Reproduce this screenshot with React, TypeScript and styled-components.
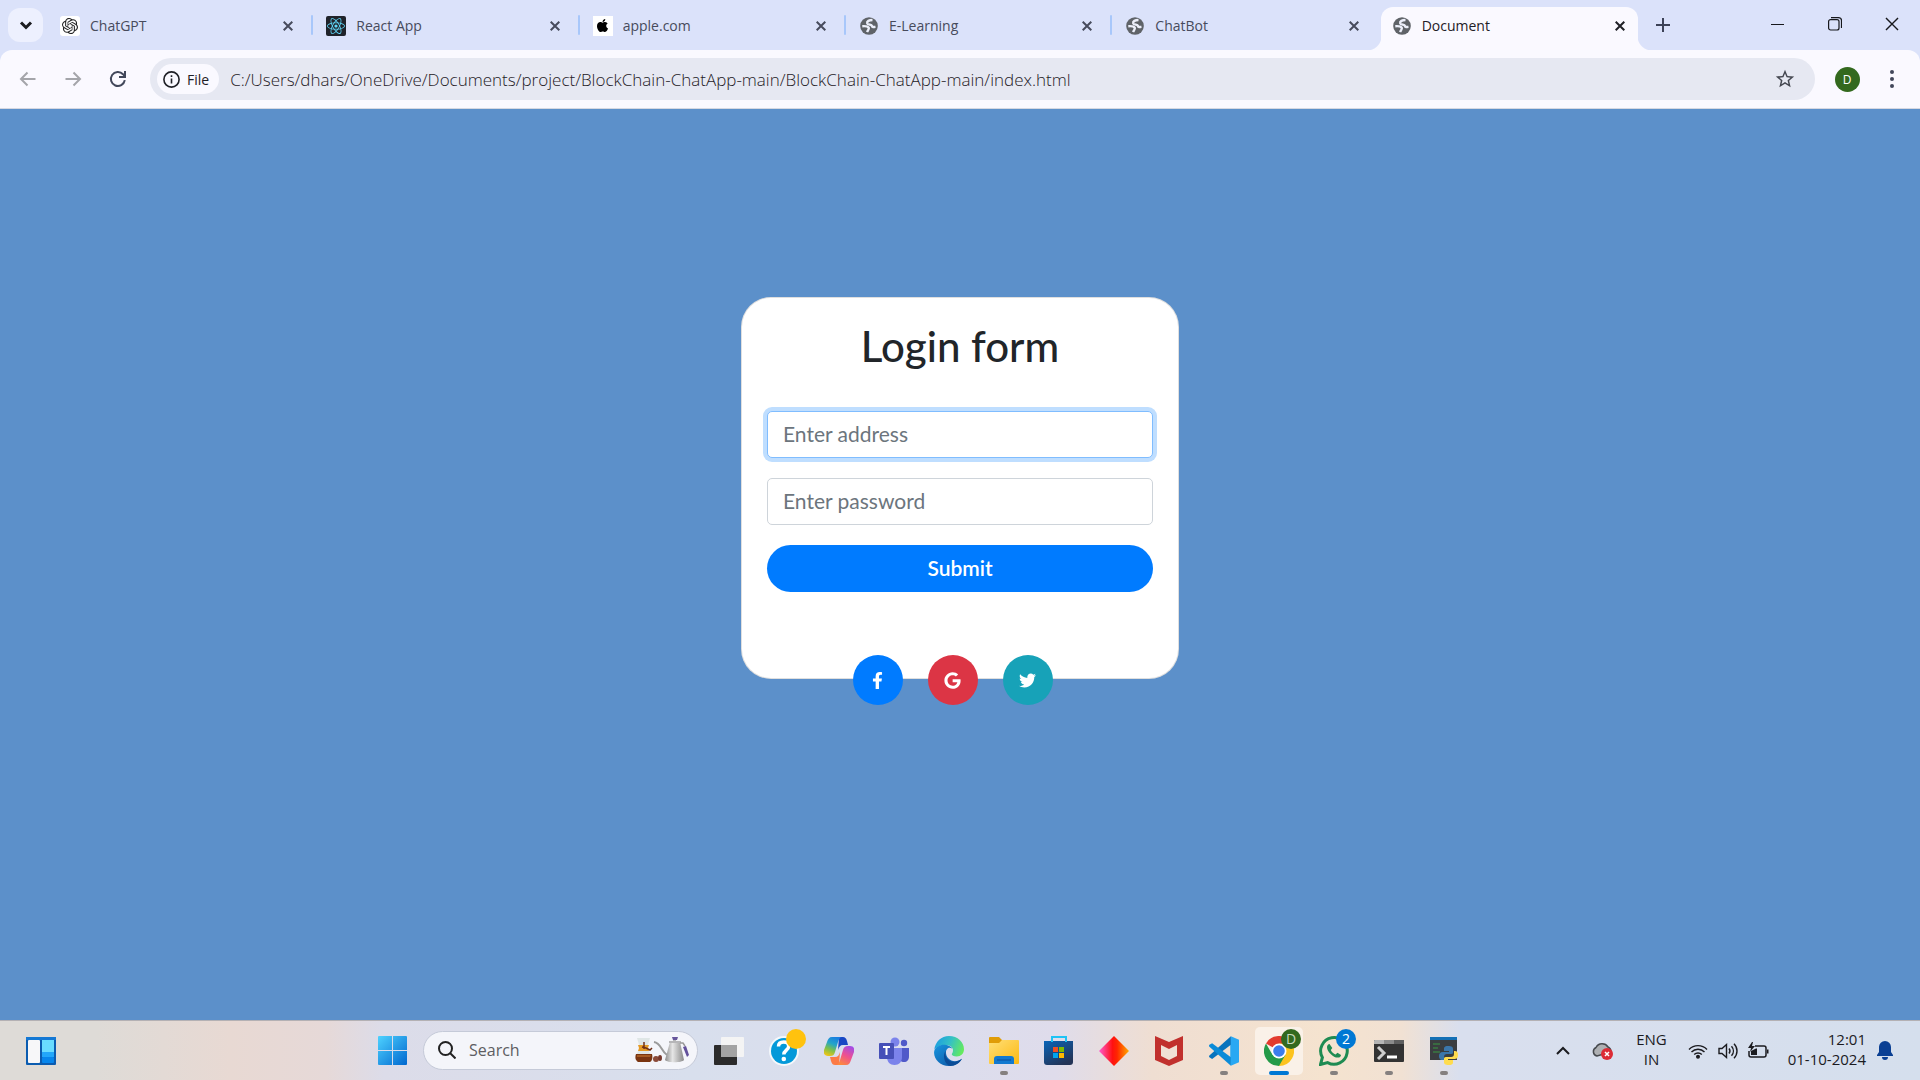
import React from "react";
import styled, { createGlobalStyle, css } from "styled-components";
import { FaApple, FaFacebookF, FaGoogle, FaReact, FaTwitter } from "react-icons/fa";
import { SiOpenai } from "react-icons/si";
import { MdStarBorder } from "react-icons/md";

const uiFont = '"Open Sans", "Noto Sans", sans-serif';
const pageFont = 'Lato, "Open Sans", sans-serif';

const GlobalStyle = createGlobalStyle`
  *, *::before, *::after { box-sizing: border-box; }
  body { margin: 0; font-family: ${uiFont}; }
  button, input { font: inherit; color: inherit; }
  button { border: 0; padding: 0; background: none; cursor: pointer; }
  svg { display: block; flex: none; }
`;

const Screen = styled.div`
  display: flex;
  flex-direction: column;
  min-height: 100vh;
  background: #dbe2fa;
`;

/* ---------- tab strip ---------- */

const TabStrip = styled.div`
  display: flex;
  align-items: stretch;
  height: 50px;
  padding-left: 8px;
`;

const TabSearch = styled.button`
  display: grid;
  place-items: center;
  flex: none;
  width: 35px;
  height: 34px;
  margin: 8px 6px 0 0;
  border-radius: 12px;
  background: #edf0fe;
  color: #1b1c20;
`;

const Tabs = styled.div`
  display: flex;
  flex: 0 1 1589px;
  min-width: 0;
  padding-top: 7px;
`;

const Tab = styled.div<{ $active?: boolean }>`
  position: relative;
  display: flex;
  flex: 1 1 0;
  align-items: center;
  gap: 10px;
  min-width: 0;
  padding: 0 6px 6px 11px;
  color: #474b5c;
  ${(p) =>
    p.$active &&
    css`
      background: #faf9ff;
      border-radius: 12px 12px 0 0;
      color: #1f2026;
      &::before,
      &::after {
        content: "";
        position: absolute;
        bottom: 0;
        width: 14px;
        height: 14px;
      }
      &::before {
        right: 100%;
        background: radial-gradient(circle at 0 0, transparent 14px, #faf9ff 15px);
      }
      &::after {
        left: 100%;
        background: radial-gradient(circle at 100% 0, transparent 14px, #faf9ff 15px);
      }
    `}
`;

const Favicon = styled.span<{ $bg?: string; $color?: string; $radius?: number }>`
  display: grid;
  place-items: center;
  flex: none;
  width: 20px;
  height: 20px;
  background: ${(p) => p.$bg ?? "transparent"};
  color: ${(p) => p.$color ?? "#5f6368"};
  border-radius: ${(p) => p.$radius ?? 0}px;
`;

const TabTitle = styled.span`
  flex: 1;
  overflow: hidden;
  white-space: nowrap;
  font-size: 14px;
  line-height: 20px;
`;

const TabClose = styled.button`
  display: grid;
  place-items: center;
  width: 24px;
  height: 24px;
`;

const TabSeparator = styled.span<{ $hidden?: boolean }>`
  flex: none;
  width: 2px;
  height: 20px;
  margin: 8px 2px 0 5px;
  border-radius: 1px;
  background: ${(p) => (p.$hidden ? "transparent" : "#a8c7fa")};
`;

const NewTab = styled.button`
  display: grid;
  place-items: center;
  width: 28px;
  margin: 0 0 0 11px;
  color: #3c4257;
`;

const WindowControls = styled.div`
  display: flex;
  margin-left: auto;
`;

const WindowButton = styled.button`
  display: grid;
  place-items: center;
  width: 57px;
  height: 48px;
  color: #17181c;
`;

/* ---------- toolbar ---------- */

const Toolbar = styled.div`
  display: flex;
  align-items: center;
  height: 59px;
  padding: 0 10px 0 5px;
  background: #faf9ff;
  border-bottom: 1px solid #d5d8e2;
  border-radius: 12px 12px 0 0;
`;

const NavButton = styled.button<{ $muted?: boolean }>`
  display: grid;
  place-items: center;
  flex: none;
  width: 45px;
  height: 42px;
  color: ${(p) => (p.$muted ? "#a4a5aa" : "#41475a")};
`;

const Omnibox = styled.div`
  display: flex;
  align-items: center;
  flex: 1;
  min-width: 0;
  height: 42px;
  margin: 0 14px 0 10px;
  padding: 0 19px 0 7px;
  border-radius: 21px;
  background: #e6e8f2;
`;

const FileChip = styled.button`
  display: flex;
  align-items: center;
  gap: 7px;
  height: 30px;
  padding: 0 10px 0 6px;
  border-radius: 15px;
  background: #faf9ff;
  color: #1f2026;
  font-size: 14px;
`;

const AddressInput = styled.input`
  flex: 1;
  min-width: 0;
  height: 30px;
  margin-left: 11px;
  padding: 0;
  border: 0;
  outline: 0;
  background: none;
  color: #1f2026;
  font-size: 17px;
  font-weight: 350;
`;

const StarButton = styled.button`
  color: #444750;
`;

const ProfileButton = styled.button`
  display: grid;
  place-items: center;
  width: 36px;
  height: 36px;
`;

const Avatar = styled.span`
  display: grid;
  place-items: center;
  width: 25px;
  height: 25px;
  border-radius: 50%;
  background: #33691e;
  color: #fff;
  font-size: 12px;
`;

const MenuButton = styled.button`
  display: grid;
  place-items: center;
  width: 36px;
  height: 36px;
  margin-left: 9px;
  color: #41475a;
`;

/* ---------- page ---------- */

const Page = styled.main`
  display: flex;
  flex: 1;
  align-items: flex-start;
  justify-content: center;
  padding: 188px 24px 60px;
  background: #5c90ca;
  font-family: ${pageFont};
`;

const Card = styled.form`
  display: flex;
  flex-direction: column;
  width: 100%;
  max-width: 438px;
  padding: 24px 25px 0;
  border: 1px solid rgba(0, 0, 0, 0.125);
  border-radius: 30px;
  background: #fff;
`;

const Title = styled.h1`
  margin: 0 0 41px;
  color: #212529;
  font-size: 42px;
  font-weight: 500;
  line-height: 48px;
  text-align: center;
`;

const Field = styled.input<{ $focused?: boolean }>`
  width: 100%;
  height: 47px;
  margin-bottom: 20px;
  padding: 0 15px 2px;
  border: 1px solid ${(p) => (p.$focused ? "#80bdff" : "#ced4da")};
  border-radius: 5px;
  outline: 0;
  background: #fff;
  box-shadow: ${(p) => (p.$focused ? "0 0 0 4px #bfdeff" : "none")};
  color: #495057;
  font-size: 21px;
  &::placeholder {
    color: #6c757d;
    opacity: 1;
  }
`;

const Submit = styled.button`
  height: 47px;
  margin-bottom: 63px;
  padding-bottom: 3px;
  border-radius: 24px;
  background: #007bff;
  color: #fff;
  font-size: 21px;
  font-weight: 600;
`;

const SocialRow = styled.div`
  display: flex;
  justify-content: center;
  gap: 25px;
  margin: 0 15px -27px 0;
`;

const SocialLink = styled.a<{ $bg: string }>`
  display: grid;
  place-items: center;
  width: 50px;
  height: 50px;
  border-radius: 50%;
  background: ${(p) => p.$bg};
  color: #fff;
  font-size: 17px;
`;

/* ---------- taskbar ---------- */

const Taskbar = styled.footer`
  display: grid;
  grid-template-columns: 1fr auto 1fr;
  align-items: center;
  height: 60px;
  border-top: 1px solid #b4b1b4;
  background: linear-gradient(
    90deg,
    #dedbd7 0%,
    #dedbd7 5%,
    #e8d9d3 12%,
    #e6d9d8 17%,
    #dcdce9 20%,
    #d8dfed 36%,
    #dcdded 50%,
    #dfdceb 55%,
    #efded2 60%,
    #f5e3cf 69%,
    #f1e1d3 73%,
    #d9dfee 76%,
    #d5dfed 100%
  );
`;

const TaskLeft = styled.div`
  padding-left: 17px;
`;

const TaskCenter = styled.div`
  display: flex;
  gap: 7px;
  margin-right: 84px;
`;

const TaskButton = styled.button<{ $active?: boolean }>`
  position: relative;
  display: grid;
  place-items: center;
  width: 48px;
  height: 48px;
  border-radius: 5px;
  background: ${(p) => (p.$active ? "#faf1e8" : "none")};
`;

const Indicator = styled.span<{ $active?: boolean }>`
  position: absolute;
  bottom: 0;
  left: 50%;
  width: ${(p) => (p.$active ? 20 : 8)}px;
  height: 4px;
  border-radius: 2px;
  background: ${(p) => (p.$active ? "#0078d4" : "#85807f")};
  transform: translateX(-50%);
`;

const Badge = styled.span<{ $bg: string; $color?: string }>`
  position: absolute;
  top: 2px;
  right: 2px;
  display: grid;
  place-items: center;
  width: 20px;
  height: 20px;
  border-radius: 50%;
  background: ${(p) => p.$bg};
  color: ${(p) => p.$color ?? "#fff"};
  font-size: 14px;
  line-height: 20px;
`;

const SearchBox = styled.label`
  display: flex;
  align-items: center;
  gap: 13px;
  width: 275px;
  height: 39px;
  margin-top: 4px;
  padding: 0 7px 0 14px;
  border: 1px solid #c5cad8;
  border-radius: 20px;
  background: #f4f5fa;
`;

const SearchInput = styled.input`
  flex: 1;
  min-width: 0;
  padding: 0;
  border: 0;
  outline: 0;
  background: none;
  font-size: 16px;
  &::placeholder {
    color: #5d5d62;
    opacity: 1;
  }
`;

const Tray = styled.div`
  display: flex;
  align-items: center;
  justify-content: flex-end;
  padding-right: 27px;
  color: #1b1b1f;
  font-size: 15px;
  line-height: 20px;
`;

const TrayButton = styled.button<{ $gap?: number }>`
  display: flex;
  align-items: center;
  gap: 10px;
  margin-left: ${(p) => p.$gap ?? 0}px;
`;

const TrayText = styled.button<{ $align: string; $gap: number }>`
  display: flex;
  flex-direction: column;
  align-items: ${(p) => p.$align};
  margin-left: ${(p) => p.$gap}px;
  padding-bottom: 3px;
`;

/* ---------- drawings ---------- */

const Cross = ({ size = 10, width = 2 }: { size?: number; width?: number }) => (
  <svg width={size} height={size} viewBox="0 0 10 10" fill="none" stroke="currentColor" strokeWidth={width}>
    <path d="M.7.7l8.6 8.6M9.3.7L.7 9.3" />
  </svg>
);

const Globe = () => (
  <svg width="20" height="20" viewBox="0 0 20 20">
    <circle cx="10" cy="10" r="8.800" fill="#5f6368" />
    <g fill="none" stroke="#eceffa" strokeWidth="2.400">
      <path d="M13.500 4C10 4 7.800 5.200 8.200 7.200c.4 1.700 4.300 1.300 4.700 2.700.2 1 .9 1.300 3.600 1" />
      <path d="M3.300 10.200c2.500-.2 5.700.2 6.500 1.600.5 1.200-.8 2.200-1.800 4.200" />
    </g>
  </svg>
);

const Chevron = ({ up, size, width = 2 }: { up?: boolean; size: number; width?: number }) => (
  <svg width={size} height={size} viewBox="0 0 16 16" fill="none" stroke="currentColor" strokeWidth={width}>
    <path d={up ? "M2 11l6-6 6 6" : "M3 5.500l5 5 5-5"} />
  </svg>
);

const Arrow = ({ forward }: { forward?: boolean }) => (
  <svg width="18" height="18" viewBox="0 0 18 18" fill="none" stroke="currentColor" strokeWidth="2">
    {forward ? <path d="M1.500 9h14M9.500 2.500L16 9l-6.500 6.500" /> : <path d="M16.500 9h-14M8.500 2.500L2 9l6.500 6.500" />}
  </svg>
);

const Reload = () => (
  <svg width="18" height="18" viewBox="0 0 18 18" fill="none" stroke="currentColor" strokeWidth="2">
    <path d="M15.800 10.200A7 7 0 1 1 14 4.200L16 6.500" />
    <path d="M16 1v6h-6" />
  </svg>
);

const WidgetsIcon = () => (
  <svg width="30" height="28" viewBox="0 0 30 28">
    <rect width="30" height="28" rx="1" fill="#0b5cb0" />
    <rect width="30" height="3" fill="#1478d4" />
    <rect x="2" y="3" width="12" height="23" rx="1" fill="#f7f7f9" />
    <rect x="16" y="3" width="12" height="12" fill="#69dcff" />
    <rect x="16" y="15" width="12" height="5" fill="#22a7fa" />
    <rect x="16" y="20" width="12" height="6" rx="1" fill="#0786ec" />
  </svg>
);

const WindowsIcon = () => (
  <svg width="29" height="29" viewBox="0 0 29 29">
    <defs>
      <linearGradient id="win" x1="0" y1="0" x2="1" y2="1">
        <stop offset="0" stopColor="#4ed2ff" />
        <stop offset="1" stopColor="#0067cf" />
      </linearGradient>
    </defs>
    <path fill="url(#win)" d="M1 0h13v14H0V1a1 1 0 0 1 1-1zM15 0h13a1 1 0 0 1 1 1v13H15zM0 15h14v14H1a1 1 0 0 1-1-1zM15 15h14v13a1 1 0 0 1-1 1H15z" />
  </svg>
);

const CoffeeArt = () => (
  <svg width="56" height="26" viewBox="0 0 56 26">
    <defs>
      <linearGradient id="kettle">
        <stop offset="0" stopColor="#8c8c8c" />
        <stop offset=".4" stopColor="#e6e6e6" />
        <stop offset="1" stopColor="#8a8a8a" />
      </linearGradient>
    </defs>
    <path d="M3 1h13l-3 10 4 7H2l4-7z" fill="#dfe6e6" />
    <path d="M2 17h16c1 4 0 7-2 8H4c-3-2-3-5-2-8z" fill="#7a3511" />
    <path d="M3 18h14l-1 2H3z" fill="#a65a22" />
    <path d="M4 8h11l-1 3 1 3H4l1-3z" fill="#e59b26" />
    <path d="M10 5v7M8 10l4 1 4 2 2-2" stroke="#703018" strokeWidth="1.500" fill="none" />
    <ellipse cx="22" cy="22" rx="3" ry="3" fill="#8b4a39" />
    <ellipse cx="26" cy="21" rx="2" ry="3" fill="#77382c" />
    <path d="M33 18C27 14 27 6 20 5" stroke="#9a9a9a" strokeWidth="2" fill="none" />
    <path d="M36 5h10l4 18c-2 3-17 3-19 0z" fill="url(#kettle)" />
    <path d="M35 4h12v2H35zM39 2h3v2h-3z" fill="#b6b6b8" />
    <path d="M38 0h6l-1 3h-4z" fill="#66559b" />
    <path d="M46 6h3l2 3" stroke="#999" strokeWidth="1.500" fill="none" />
    <path d="M49 10l3-1 3 9-2 2z" fill="#62509b" />
  </svg>
);

const TaskViewIcon = () => (
  <svg width="30" height="28" viewBox="0 0 30 28">
    <rect y="8" width="23" height="20" rx="1" fill="#2b2b2b" />
    <rect x="7" width="23" height="20" rx="1" fill="#f4f4f4" />
    <rect x="7" y="8" width="16" height="12" fill="#a3a3a3" />
  </svg>
);

const HelpIcon = () => (
  <svg width="30" height="30" viewBox="0 0 30 30">
    <circle cx="15" cy="15" r="15" fill="#f4f8fb" />
    <circle cx="15" cy="15" r="13" fill="#0499d9" />
    <path d="M9.500 10.500c0-3 2.200-4.500 5.200-4.500s5 1.600 5 4.200c0 3.800-4.900 4-4.900 8.300" stroke="#fff" strokeWidth="3.500" fill="none" />
    <circle cx="14.800" cy="23" r="2.300" fill="#fff" />
  </svg>
);

const CopilotIcon = () => (
  <svg width="30" height="28" viewBox="0 0 30 28">
    <defs>
      <linearGradient id="cpA" x1=".6" y1="0" x2=".2" y2="1">
        <stop offset="0" stopColor="#1a7fe0" />
        <stop offset=".35" stopColor="#24a5c9" />
        <stop offset=".65" stopColor="#7cc04b" />
        <stop offset="1" stopColor="#f5c514" />
      </linearGradient>
      <linearGradient id="cpB" x1=".8" y1="0" x2=".3" y2="1">
        <stop offset="0" stopColor="#a14be8" />
        <stop offset=".5" stopColor="#ee5090" />
        <stop offset="1" stopColor="#fd8a3c" />
      </linearGradient>
    </defs>
    <path d="M15 0h4c2 0 3 1 4 4l1 4h-5c-3 0-4 2-5 5z" fill="#1947c4" />
    <path d="M15 28h-4c-2 0-3-1-4-4l-1-4h5c3 0 4-2 5-5z" fill="#fc7a45" />
    <path d="M8 0h10c-2 0-3 2-4 5l-3 10c-1 3-2 4-5 4H4c-3 0-5-2-4-6l3-8c1-3 2-5 5-5z" fill="url(#cpA)" />
    <path d="M22 28H12c2 0 3-2 4-5l3-10c1-3 2-4 5-4h2c3 0 5 2 4 6l-3 8c-1 3-2 5-5 5z" fill="url(#cpB)" />
  </svg>
);

const TeamsIcon = () => (
  <svg width="30" height="28" viewBox="0 0 30 28">
    <circle cx="16" cy="5" r="4.500" fill="#7b83eb" />
    <circle cx="25" cy="6" r="3.200" fill="#5059c9" />
    <path d="M20 11h10v8c0 4-2 6-5 6s-5-2-5-6z" fill="#5059c9" />
    <path d="M8 11h15v9c0 5-3 8-7.500 8S8 25 8 20z" fill="#7b83eb" />
    <rect y="6" width="15" height="16" rx="1" fill="#4650b8" />
    <path d="M4 10h7M7.500 10v8" stroke="#fff" strokeWidth="2" />
  </svg>
);

const EdgeIcon = () => (
  <svg width="30" height="30" viewBox="0 0 24 24">
    <defs>
      <linearGradient id="edA" x1="0" y1=".3" x2="1" y2=".6">
        <stop offset="0" stopColor="#1b9de2" />
        <stop offset=".5" stopColor="#35c1c4" />
        <stop offset="1" stopColor="#66eb5c" />
      </linearGradient>
      <linearGradient id="edB" x1="0" y1="0" x2="1" y2="1">
        <stop offset="0" stopColor="#1795df" />
        <stop offset="1" stopColor="#0c4f9e" />
      </linearGradient>
    </defs>
    <path d="M.2 11C1 4.500 5.900 0 12 0c7 0 12 5 12 10.500 0 3.500-2.500 5.800-5.800 5.800-2.600 0-4-.9-4-1.700 0-.7 1-1.200 1-3.100 0-2.300-2.300-4.300-5.700-4.300C5 7.200 1.500 9 .2 11z" fill="url(#edA)" />
    <path d="M.1 12.500C.5 9 4.600 6.800 8.700 7c3.300.2 5.300 1.800 5.900 3.100-1-.7-2.400-.9-3.400-.3-2.200 1.300-2.200 5.200.2 8 2.800 3.200 7.500 3 11 .4-2 3.600-6 5.800-10.400 5.800C5 24-.5 18.500.1 12.500z" fill="url(#edB)" />
    <path d="M9.400 11.800c-.8 2.500-.1 5.500 2.200 7.400 3 2.500 7.400 1.700 10.800-1-1.900 3.600-5.400 5.600-9.400 5.800-4.300-1-6.700-8.400-3.600-12.200z" fill="#0a4c97" />
  </svg>
);

const ExplorerIcon = () => (
  <svg width="30" height="27" viewBox="0 0 30 27">
    <defs>
      <linearGradient id="fold" x1="0" y1="0" x2="1" y2="1">
        <stop offset="0" stopColor="#ffdf77" />
        <stop offset="1" stopColor="#fcb912" />
      </linearGradient>
    </defs>
    <path d="M0 1a1 1 0 0 1 1-1h9l3 3h16v5H0z" fill="#e09c08" />
    <path d="M0 6h10l3-3h16a1 1 0 0 1 1 1v22a1 1 0 0 1-1 1H1a1 1 0 0 1-1-1z" fill="url(#fold)" />
    <path d="M5 27v-5a3 3 0 0 1 3-3h14a3 3 0 0 1 3 3v5z" fill="#1279d0" />
    <path d="M8 23h14" stroke="#0a4f9b" strokeWidth="1" />
  </svg>
);

const StoreIcon = () => (
  <svg width="30" height="30" viewBox="0 0 30 30">
    <defs>
      <linearGradient id="store" x1="0" y1="0" x2=".6" y2="1">
        <stop offset="0" stopColor="#0a64b8" />
        <stop offset="1" stopColor="#233457" />
      </linearGradient>
    </defs>
    <path d="M0 5h29v21a3 3 0 0 1-3 3H3a3 3 0 0 1-3-3z" fill="url(#store)" />
    <path d="M8 6V1h14v5" stroke="#1fc3f5" strokeWidth="2" fill="none" />
    <path d="M9 11h5v5H9z" fill="#f25022" />
    <path d="M15 11h5v5h-5z" fill="#7fba00" />
    <path d="M9 17h5v5H9z" fill="#00a4ef" />
    <path d="M15 17h5v5h-5z" fill="#ffb900" />
  </svg>
);

const DiamondIcon = () => (
  <svg width="30" height="30" viewBox="0 0 30 30">
    <defs>
      <linearGradient id="dia">
        <stop offset="0" stopColor="#ff5bd0" />
        <stop offset=".45" stopColor="#ff1111" />
        <stop offset=".6" stopColor="#ff2600" />
        <stop offset="1" stopColor="#ffab00" />
      </linearGradient>
    </defs>
    <path d="M15 0l15 15-15 15L0 15z" fill="url(#dia)" />
  </svg>
);

const McAfeeIcon = () => (
  <svg width="28" height="30" viewBox="0 0 28 30">
    <path d="M0 0l14 6L28 0v24l-14 6-14-6z" fill="#c1302d" />
    <path d="M6 9l8 4 8-4v11l-8 4-8-4z" fill="#f0e0d5" />
  </svg>
);

const VsCodeIcon = () => (
  <svg width="30" height="30" viewBox="0 0 24 24">
    <path d="M17.500.2L24 3v18l-6.500 2.800L17 18V6z" fill="#29a8f3" />
    <path d="M17.500.2V7L2.500 18.300.3 17c-.4-.4-.4-1.100 0-1.500z" fill="#0873bd" />
    <path d="M17.500 23.800V17L2.500 5.700.3 7c-.4.4-.4 1.100 0 1.500z" fill="#0b8bd8" />
  </svg>
);

const ChromeIcon = () => (
  <svg width="30" height="30" viewBox="0 0 30 30">
    <path d="M15 15L2 7.500A15 15 0 0 1 28 7.500z" fill="#e33b2e" />
    <path d="M15 15V7.500h13A15 15 0 0 1 15 30z" fill="#fcc31e" />
    <path d="M15 15l6.500 3.800L15 30A15 15 0 0 1 2 7.500l6.500 11.300z" fill="#249a48" />
    <circle cx="15" cy="15" r="7.500" fill="#fff" />
    <circle cx="15" cy="15" r="5.800" fill="#3b7ded" />
  </svg>
);

const WhatsAppIcon = () => (
  <svg width="30" height="30" viewBox="0 0 30 30" fill="none">
    <path d="M1.500 28.500l1.900-7A13.300 13.300 0 1 1 8.600 26.600z" stroke="#1e8b52" strokeWidth="3" />
    <path d="M10.500 8c-1.300 0-2.500 1.500-2.500 3.200 0 4.300 6.200 10.400 10.800 10.400 1.800 0 3.200-1.200 3.200-2.700l-3.500-2.100-2 1.700c-1.900-.8-3.900-2.700-4.700-4.600l1.500-1.900z" fill="#1e8b52" />
  </svg>
);

const TerminalIcon = () => (
  <svg width="30" height="22" viewBox="0 0 30 22">
    <rect width="30" height="22" rx="1" fill="#333" />
    <path d="M0 1a1 1 0 0 1 1-1h9v4H0z" fill="#b5b5b5" />
    <path d="M10 0h10v4H10z" fill="#8b8b8b" />
    <path d="M20 0h9a1 1 0 0 1 1 1v3H20z" fill="#5f5f5f" />
    <path d="M4 7l6 6-6 6" stroke="#cfcfcf" strokeWidth="3" fill="none" />
    <path d="M13 17h10" stroke="#fff" strokeWidth="3" />
  </svg>
);

const PythonIcon = () => (
  <svg width="28" height="28" viewBox="0 0 28 28">
    <rect width="27" height="23" fill="#3a3d40" />
    <rect width="27" height="3" fill="#1470b5" />
    <path d="M3 7h7M3 11h5M3 15h7" stroke="#3a7a42" strokeWidth="1.500" />
    <path d="M18 9c-4 0-4 2-4 3v2h5v1h-6c-3 0-4 2-4 4s1 4 3 4h2v-3c0-2 1-3 3-3h4c2 0 2-1 2-2v-3c0-2-1-3-5-3z" fill="#3b76ab" />
    <path d="M19 28c4 0 4-2 4-3v-2h-5v-1h6c3 0 4-1 4-4s-1-4-3-4h-1v3c0 2-1 3-3 3h-5c-2 0-2 1-2 2v3c0 2 1 3 5 3z" fill="#ffdc4e" />
  </svg>
);

const CloudIcon = () => (
  <svg width="21" height="18" viewBox="0 0 21 18">
    <path d="M5 14a4.500 4.500 0 0 1-1-8.500A7 7 0 0 1 16 5c2 1 3 3 3 5z" fill="#aeb0b3" stroke="#46494e" strokeWidth="1.500" />
    <circle cx="15" cy="12" r="6" fill="#dc2b35" />
    <path d="M13 10l4 4m0-4l-4 4" stroke="#fff" strokeWidth="1.500" />
  </svg>
);

const WifiIcon = () => (
  <svg width="20" height="16" viewBox="0 0 20 16" fill="none" stroke="currentColor" strokeWidth="1.400">
    <path d="M1 6.500a12.500 12.500 0 0 1 18 0M3.500 9a9 9 0 0 1 13 0M6.200 11.500a5.500 5.500 0 0 1 7.600 0" />
    <circle cx="10" cy="13.800" r="1.300" fill="currentColor" />
  </svg>
);

const SpeakerIcon = () => (
  <svg width="20" height="18" viewBox="0 0 20 18" fill="none" stroke="currentColor" strokeWidth="1.400">
    <path d="M1 6.500h3L8.500 2.500v13L4 11.500H1zM11 6.500c1.200 1.500 1.200 3.500 0 5M13.500 4.200c2.500 2.800 2.500 6.800 0 9.600M16 1.800c4 4 4 10.400 0 14.400" />
  </svg>
);

const BatteryIcon = () => (
  <svg width="21" height="17" viewBox="0 0 21 17">
    <path d="M7 4h9a2 2 0 0 1 2 2v7a2 2 0 0 1-2 2H3a2 2 0 0 1-2-2V9" fill="none" stroke="currentColor" strokeWidth="1.500" />
    <path d="M19 7.500h1.500v4H19zM3 13V9l5-2.500h1V13zM4 0L0 6h3l-1 4 5-6H4l1-4z" fill="currentColor" />
  </svg>
);

const BellIcon = () => (
  <svg width="16" height="19" viewBox="0 0 16 19" fill="#0a3f93">
    <path d="M8 0a6 6 0 0 1 6 6v5l2 3v1H0v-1l2-3V6a6 6 0 0 1 6-6zM5 16h6a3 3 0 0 1-6 0z" />
  </svg>
);

/* ---------- data ---------- */

const globe = <Favicon><Globe /></Favicon>;

const tabs = [
  { title: "ChatGPT", icon: <Favicon $bg="#fff" $color="#222" $radius={3}><SiOpenai size={16} /></Favicon> },
  { title: "React App", icon: <Favicon $bg="#20232a" $color="#61dafb" $radius={2}><FaReact size={18} /></Favicon> },
  { title: "apple.com", icon: <Favicon $bg="#fff" $color="#000"><FaApple size={15} /></Favicon> },
  { title: "E-Learning", icon: globe },
  { title: "ChatBot", icon: globe },
  { title: "Document", icon: globe, active: true },
];

const socials = [
  { name: "Facebook", bg: "#007bff", icon: <FaFacebookF /> },
  { name: "Google", bg: "#dc3545", icon: <FaGoogle /> },
  { name: "Twitter", bg: "#17a2b8", icon: <FaTwitter /> },
];

type TaskbarApp = { name: string; icon: React.ReactNode; running?: boolean; active?: boolean; badge?: React.ReactNode };

const apps: TaskbarApp[] = [
  { name: "Task View", icon: <TaskViewIcon /> },
  { name: "Get Help", icon: <HelpIcon />, badge: <Badge $bg="#ffc20e" /> },
  { name: "Copilot", icon: <CopilotIcon /> },
  { name: "Teams", icon: <TeamsIcon /> },
  { name: "Edge", icon: <EdgeIcon /> },
  { name: "File Explorer", icon: <ExplorerIcon />, running: true },
  { name: "Microsoft Store", icon: <StoreIcon /> },
  { name: "Diamond", icon: <DiamondIcon /> },
  { name: "McAfee", icon: <McAfeeIcon /> },
  { name: "Visual Studio Code", icon: <VsCodeIcon />, running: true },
  { name: "Chrome", icon: <ChromeIcon />, running: true, active: true, badge: <Badge $bg="#33691e" $color="#c9dabf">D</Badge> },
  { name: "WhatsApp", icon: <WhatsAppIcon />, running: true, badge: <Badge $bg="#0078d4">2</Badge> },
  { name: "Terminal", icon: <TerminalIcon />, running: true },
  { name: "Python", icon: <PythonIcon />, running: true },
];

export default function App() {
  return (
    <Screen>
      <GlobalStyle />
      <TabStrip>
        <TabSearch aria-label="Search tabs"><Chevron size={16} width={3} /></TabSearch>
        <Tabs>
          {tabs.map((tab, i) => (
            <React.Fragment key={tab.title}>
              {i > 0 && <TabSeparator $hidden={tab.active} />}
              <Tab $active={tab.active}>
                {tab.icon}
                <TabTitle>{tab.title}</TabTitle>
                <TabClose aria-label={`Close ${tab.title}`}><Cross /></TabClose>
              </Tab>
            </React.Fragment>
          ))}
        </Tabs>
        <NewTab aria-label="New tab">
          <svg width="14" height="14" viewBox="0 0 14 14" stroke="currentColor" strokeWidth="2"><path d="M7 0v14M0 7h14" /></svg>
        </NewTab>
        <WindowControls>
          <WindowButton aria-label="Minimise">
            <svg width="13" height="13" viewBox="0 0 13 13" stroke="currentColor"><path d="M0 6.500h13" /></svg>
          </WindowButton>
          <WindowButton aria-label="Restore">
            <svg width="14" height="14" viewBox="0 0 14 14" fill="none" stroke="currentColor" strokeWidth="1.200">
              <rect x=".6" y="2.600" width="10.400" height="10.400" rx="2" />
              <path d="M3 .6h7.500a3 3 0 0 1 3 3V11" />
            </svg>
          </WindowButton>
          <WindowButton aria-label="Close window"><Cross size={14} width={1} /></WindowButton>
        </WindowControls>
      </TabStrip>

      <Toolbar>
        <NavButton $muted aria-label="Back"><Arrow /></NavButton>
        <NavButton $muted aria-label="Forward"><Arrow forward /></NavButton>
        <NavButton aria-label="Reload"><Reload /></NavButton>
        <Omnibox>
          <FileChip>
            <svg width="17" height="17" viewBox="0 0 17 17" fill="none" stroke="currentColor" strokeWidth="1.600">
              <circle cx="8.500" cy="8.500" r="7.600" />
              <path d="M8.500 7.500v5M8.500 4.200v1.800" />
            </svg>
            File
          </FileChip>
          <AddressInput
            aria-label="Address"
            defaultValue="C:/Users/dhars/OneDrive/Documents/project/BlockChain-ChatApp-main/BlockChain-ChatApp-main/index.html"
          />
          <StarButton aria-label="Bookmark this page"><MdStarBorder size={22} /></StarButton>
        </Omnibox>
        <ProfileButton aria-label="Profile"><Avatar>D</Avatar></ProfileButton>
        <MenuButton aria-label="Menu">
          <svg width="4" height="18" viewBox="0 0 4 18" fill="currentColor">
            <circle cx="2" cy="2" r="2" /><circle cx="2" cy="9" r="2" /><circle cx="2" cy="16" r="2" />
          </svg>
        </MenuButton>
      </Toolbar>

      <Page>
        <Card onSubmit={(e) => e.preventDefault()}>
          <Title>Login form</Title>
          <Field $focused type="text" aria-label="Address" placeholder="Enter address" />
          <Field type="password" aria-label="Password" placeholder="Enter password" />
          <Submit type="submit">Submit</Submit>
          <SocialRow>
            {socials.map((s) => (
              <SocialLink key={s.name} href="#" aria-label={s.name} $bg={s.bg}>{s.icon}</SocialLink>
            ))}
          </SocialRow>
        </Card>
      </Page>

      <Taskbar>
        <TaskLeft>
          <TaskButton aria-label="Widgets"><WidgetsIcon /></TaskButton>
        </TaskLeft>
        <TaskCenter>
          <TaskButton aria-label="Start"><WindowsIcon /></TaskButton>
          <SearchBox>
            <svg width="18" height="18" viewBox="0 0 18 18" fill="none" stroke="#222" strokeWidth="2">
              <circle cx="7.500" cy="7.500" r="6.500" />
              <path d="M12 12l5.500 5.500" />
            </svg>
            <SearchInput type="search" aria-label="Search" placeholder="Search" />
            <CoffeeArt />
          </SearchBox>
          {apps.map((app) => (
            <TaskButton key={app.name} aria-label={app.name} $active={app.active}>
              {app.icon}
              {app.badge}
              {app.running && <Indicator $active={app.active} />}
            </TaskButton>
          ))}
        </TaskCenter>
        <Tray>
          <TrayButton aria-label="Show hidden icons"><Chevron up size={16} width={2} /></TrayButton>
          <TrayButton $gap={21} aria-label="OneDrive"><CloudIcon /></TrayButton>
          <TrayText $align="center" $gap={23}><span>ENG</span><span>IN</span></TrayText>
          <TrayButton $gap={21} aria-label="Network, sound and battery">
            <WifiIcon /><SpeakerIcon /><BatteryIcon />
          </TrayButton>
          <TrayText $align="flex-end" $gap={19}><span>12:01</span><span>01-10-2024</span></TrayText>
          <TrayButton $gap={11} aria-label="Notifications"><BellIcon /></TrayButton>
        </Tray>
      </Taskbar>
    </Screen>
  );
}
